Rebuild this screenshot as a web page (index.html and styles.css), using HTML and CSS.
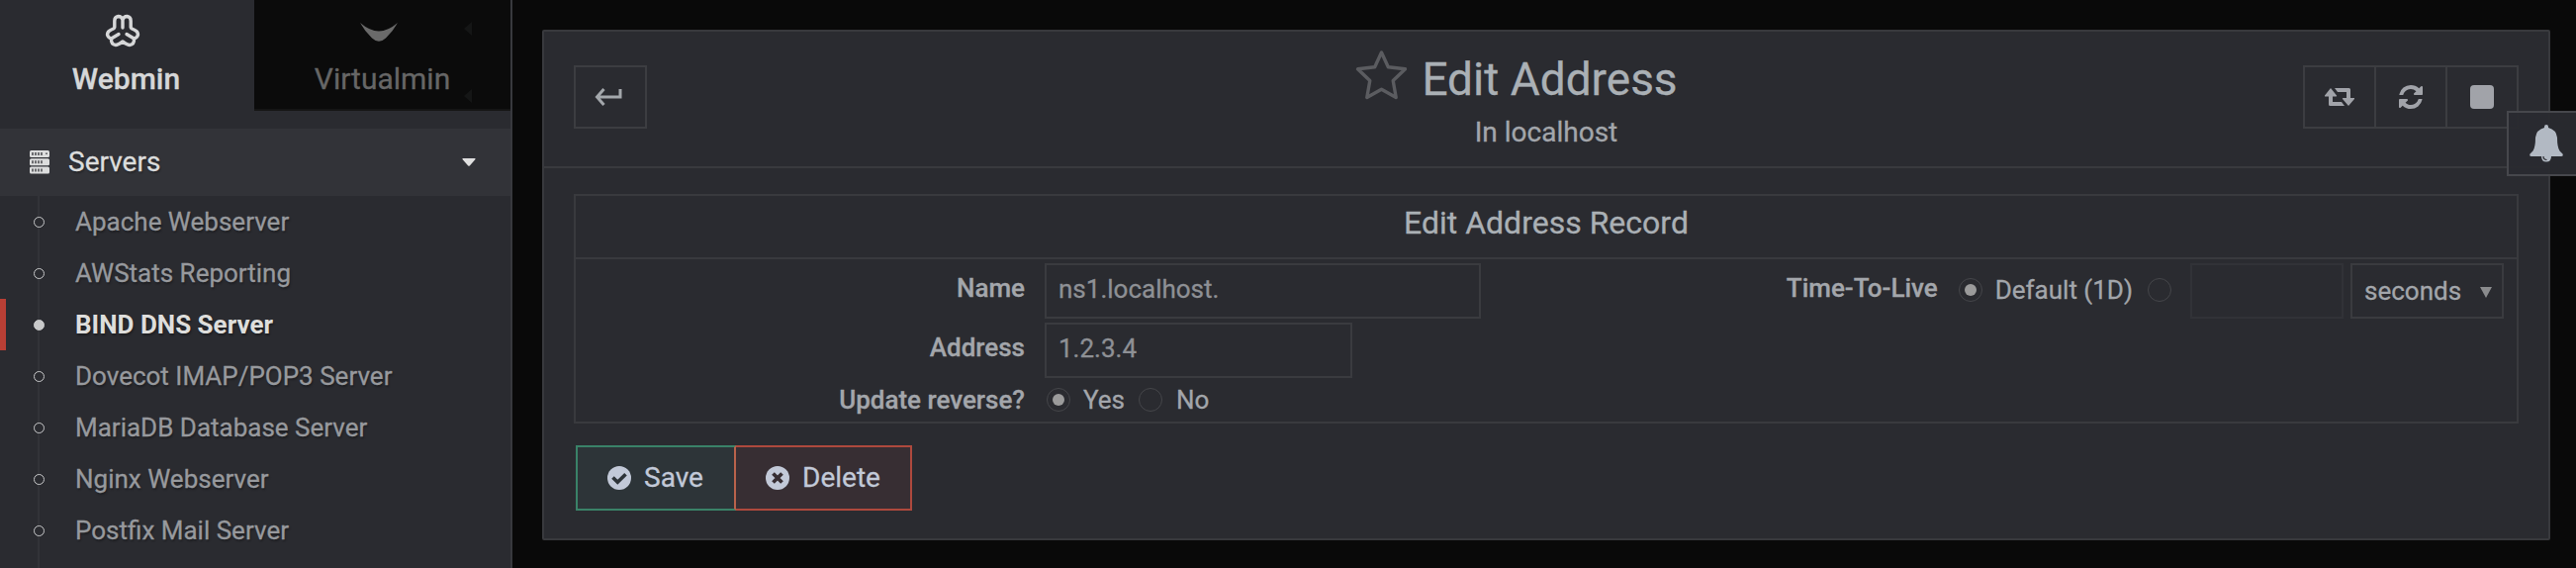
FILE: index.html
```html
<!DOCTYPE html>
<html lang="en">
<head>
<meta charset="utf-8">
<title>Edit Address</title>
<link rel="stylesheet" href="styles.css">
</head>
<body>
<aside class="sidebar">
  <nav class="tabs">
    <a class="tab tab-active">
      <svg class="tab-icon" width="36" height="34" viewBox="0 0 36 34" fill="none" stroke="#d6d7d8" stroke-width="3.4" stroke-linecap="round" stroke-linejoin="round"><path d="M18 14V6Q17 2.500 13.500 2.500Q9.800 3 9.800 7V13.500Q9.500 15 6.500 16Q2.500 17.500 2.500 21Q3 24 6.500 25Q6 31 11 31.500Q13 31.500 18 28Q23 31.500 25 31.500Q30 31 29.500 25Q33 24 33.500 21Q33.500 17.500 29.500 16Q26.500 15 26.200 13.500V7Q26.200 3 22.500 2.500Q19 2.500 18 6M6.500 25L14 20.500M29.500 25L22 20.500"/></svg>
      <span>Webmin</span>
    </a>
    <a class="tab tab-muted">
      <svg class="tab-icon" width="38" height="34" viewBox="0 0 38 34"><path d="M0 9Q10 17.500 19 17.500Q28 17.500 38 9Q33 18 26 24.500Q19 31 12 24.500Q5 18 0 9Z" fill="#6a6a6a"/></svg>
      <span>Virtualmin</span>
      <i class="notch notch-top"></i><i class="notch notch-bottom"></i>
    </a>
  </nav>
  <div class="group">
    <svg width="20" height="24" viewBox="0 0 20 24"><g fill="#dcdddd"><rect y="0" width="20" height="7" rx="1.500"/><rect y="8.200" width="20" height="7" rx="1.500"/><rect y="16.400" width="20" height="7" rx="1.500"/></g><path d="M3 2v3M6 2v3M9 2v3M12 2v3M17 2.500v1.500M3 10.200v3M6 10.200v3M9 10.200v3M12 10.200v3M3 18.400v3M6 18.400v3M9 18.400v3M12 18.400v3" stroke="#323338" stroke-width="1.300"/></svg>
    <span class="group-name">Servers</span>
    <svg width="14" height="8" viewBox="0 0 14 8"><path d="M1 0H13Q14 .5 13.300 1.300L7.800 7.500Q7 8.200 6.200 7.500L.7 1.300Q0 .5 1 0Z" fill="#e0e0e0"/></svg>
  </div>
  <ul class="modules">
    <li>Apache Webserver</li>
    <li>AWStats Reporting</li>
    <li class="current">BIND DNS Server</li>
    <li>Dovecot IMAP/POP3 Server</li>
    <li>MariaDB Database Server</li>
    <li>Nginx Webserver</li>
    <li>Postfix Mail Server</li>
  </ul>
</aside>
<main class="panel">
  <header class="panel-head">
    <a class="back"><svg width="28" height="18" viewBox="0 0 28 18" fill="none" stroke="#a3a7ab" stroke-width="3"><path d="M9.500 1L2.500 9L9.500 17M3 9H26V1"/></svg></a>
    <div class="heading">
      <h1><svg class="star" width="54" height="54" viewBox="0 0 54 54" fill="none" stroke="#5b5c60" stroke-width="3.400" stroke-linejoin="round"><path d="M26.500 3L33.300 17.700L50.500 19.800L38.200 31.500L41.200 48.500L26.500 40.200L11.800 48.500L14.800 31.500L2.500 19.800L19.700 17.700Z"/></svg><span>Edit Address</span></h1>
      <p>In localhost</p>
    </div>
    <div class="tools">
      <a><svg width="30" height="18" viewBox="0 0 30 18" fill="#a1a3a9"><path d="M6 0L12 7.500Q12.500 8.500 11.500 8.500H8V14H17L20 18H5.500Q4 18 4 16.500V8.500H.5Q-.5 8.500 0 7.500ZM10 0H24.500Q26 0 26 1.500V10H29.500Q30.500 10 30 11L24 18L18 11Q17.500 10 18.500 10H22V4H13Z"/></svg></a>
      <a><svg width="28" height="28" viewBox="0 0 1792 1792"><path fill="#a1a3a9" d="M1639 1056q0 5-1 7-64 268-268 434.500T892 1664q-146 0-282.500-55T366 1452l-129 129q-19 19-45 19t-45-19-19-45v-448q0-26 19-45t45-19h448q26 0 45 19t19 45-19 45l-137 137q71 66 161 102t187 36q134 0 250-65t186-179q11-17 53-117 8-23 30-23h192q13 0 22.500 9.500t9.500 22.500zm25-800v448q0 26-19 45t-45 19h-448q-26 0-45-19t-19-45 19-45l138-138Q1097 384 896 384q-134 0-250 65T460 628q-11 17-53 117-8 23-30 23H178q-13 0-22.500-9.500T146 736v-7q65-268 270-434.500T896 128q146 0 284 55.500T1425 340l130-129q19-19 45-19t45 19 19 45z"/></svg></a>
      <a><i class="stop"></i></a>
    </div>
  </header>
  <section class="record">
    <h2>Edit Address Record</h2>
    <div class="fields">
      <div class="fields-left">
        <div class="row"><label>Name</label><div class="input name-input">ns1.localhost.</div></div>
        <div class="row"><label>Address</label><div class="input address-input">1.2.3.4</div></div>
        <div class="row row-short"><label>Update reverse?</label><i class="radio on"></i><span class="yes">Yes</span><i class="radio"></i><span class="no">No</span></div>
      </div>
      <div class="ttl"><label>Time-To-Live</label><i class="radio on"></i><span class="default">Default (1D)</span><i class="radio"></i><div class="input ttl-input"></div><div class="input select"><span>seconds</span><i class="arrow"></i></div></div>
    </div>
  </section>
  <div class="actions">
    <button class="save"><svg width="24" height="24" viewBox="0 0 24 24"><circle cx="12" cy="12" r="12" fill="#c2c9d8"/><path d="M5.500 11.500L10.300 16.300L18.500 8.200" fill="none" stroke="#2d3338" stroke-width="3.600"/></svg><span>Save</span></button>
    <button class="delete"><svg width="24" height="24" viewBox="0 0 24 24"><circle cx="12" cy="12" r="12" fill="#c2c9d8"/><path d="M7.500 7.500L16.500 16.500M16.500 7.500L7.500 16.500" fill="none" stroke="#372e33" stroke-width="3.800"/></svg><span>Delete</span></button>
  </div>
</main>
<div class="bell"><svg width="34" height="38" viewBox="0 0 34 38"><path d="M17 0Q19 0 19 2V3Q27 5 28 13Q28 23 30.500 26.500L33.500 29.500Q34.500 32 32 32H22Q22 37.500 17 37.500Q12 37.500 12 32H2Q-.5 32 .5 29.500L3.500 26.500Q6 23 6 13Q7 5 15 3V2Q15 0 17 0Z" fill="#b2b9c3"/><path d="M14 32Q14 35.500 17.500 35.500" fill="none" stroke="#2a2b30" stroke-width="1.200"/></svg></div>
</body>
</html>
```
FILE: styles.css
```css
*, *::before { box-sizing: border-box; }
body {
  margin: 0;
  width: 2604px;
  height: 574px;
  overflow: hidden;
  position: relative;
  display: flex;
  align-items: flex-start;
  background: #090909;
  color: #a3a6ab;
  font: 26px/30px Roboto, sans-serif;
  -webkit-text-stroke: .3px;
}
svg { display: block; flex: none; }
h1, h2, p, ul { margin: 0; padding: 0; font-weight: 400; }

/* Sidebar */
.sidebar {
  width: 518px;
  height: 574px;
  flex: none;
  background: #2a2b30;
  border-right: 2px solid #38393e;
  text-shadow: 1px 2px 2px rgba(0, 0, 0, .3);
}
.tabs { display: flex; height: 130px; align-items: flex-start; }
.tab {
  position: relative;
  width: 257px;
  height: 112px;
  padding-top: 14px;
  display: flex;
  flex-direction: column;
  align-items: center;
  font-size: 30px;
  line-height: 36px;
  text-shadow: none;
}
.tab-icon { margin: 0 8px 14px 0; }
.tab-active { color: #d6d7d8; font-weight: 500; padding-right: 2px; }
.tab-muted {
  width: 259px;
  background: #0b0b0b;
  border-bottom: 2px solid #151515;
  color: #666;
}
.notch {
  position: absolute;
  left: 212px;
  border: solid transparent;
  border-width: 7px 8px 7px 0;
  border-right-color: #151616;
}
.notch-top { top: 22px; }
.notch-bottom { top: 90px; }
.group {
  height: 68px;
  padding: 0 35px 0 30px;
  display: flex;
  align-items: center;
  background: #323338;
  color: #dcdddd;
  font-size: 28px;
}
.group-name { flex: 1; margin-left: 19px; }
.modules {
  height: 376px;
  list-style: none;
  background: linear-gradient(#323338, #323338) 38px 0 / 2px 100% no-repeat;
}
.modules li {
  height: 52px;
  padding-left: 34px;
  display: flex;
  align-items: center;
  color: #97999d;
}
.modules li::before {
  content: "";
  width: 11px;
  height: 11px;
  margin-right: 31px;
  border: 1.5px solid #c8c9ca;
  border-radius: 50%;
  background: #2a2b30;
}
.modules .current {
  padding-left: 28px;
  border-left: 6px solid #b93f35;
  color: #dededc;
  font-weight: 700;
  -webkit-text-stroke: 0;
}
.modules .current::before { background: #c8c9ca; }

/* Panel */
.panel {
  width: 2030px;
  height: 516px;
  margin: 30px 0 0 30px;
  background: #2a2b30;
  border: 2px solid #38393d;
  border-radius: 2px;
}
.panel-head {
  height: 138px;
  padding: 34px 30px 0;
  display: grid;
  grid-template-columns: 218px 1fr 218px;
  align-items: start;
  border-bottom: 2px solid #393a3e;
}
.back {
  width: 74px;
  height: 64px;
  display: flex;
  align-items: center;
  justify-content: center;
  border: 2px solid #3c3d41;
  padding-right: 4px;
}
.heading { margin-top: -34px; padding-top: 16px; text-align: center; }
h1 {
  display: flex;
  justify-content: center;
  padding-right: 60px;
  font-size: 46px;
  line-height: 64px;
  color: #aab0b5;
}
.star { margin: 2px 13px 0 0; }
.heading p { font-size: 28px; line-height: 34px; margin-top: 5px; }
.tools { display: flex; width: 218px; height: 64px; border: 2px solid #3c3d41; }
.tools a {
  flex: 1;
  display: flex;
  align-items: center;
  justify-content: center;
}
.tools a + a { border-left: 2px solid #3c3d41; }
.stop { width: 24px; height: 24px; border-radius: 4px; background: #a1a3a9; }

.record {
  margin: 26px 30px 0;
  height: 232px;
  border: 2px solid #393a3e;
}
h2 {
  height: 64px;
  border-bottom: 2px solid #393a3e;
  color: #aab0b5;
  font-size: 32px;
  line-height: 54px;
  text-align: center;
}
.fields { display: flex; justify-content: space-between; padding: 4px 13px 0 0; }
.row { display: flex; height: 60px; }
.row label { width: 454px; margin: 10px 20px 0 0; text-align: right; }
label { font-weight: 500; }
.input {
  height: 56px;
  padding: 9px 12px;
  border: 2px solid #3a3b3f;
  color: #8e9095;
}
.name-input { width: 441px; }
.address-input { width: 311px; }
.row-short { height: 36px; align-items: center; }
.row-short label { margin-top: 0; }
.radio {
  flex: none;
  width: 24px;
  height: 24px;
  border: 1px solid #45464a;
  border-radius: 50%;
  display: flex;
  align-items: center;
  justify-content: center;
}
.on::before { content: ""; width: 12px; height: 12px; border-radius: 50%; background: #9b9b9b; }
.row-short .radio { margin-left: 2px; }
.yes { margin: 0 12px 0 13px; }
.no { margin-left: 14px; }
.ttl { display: flex; }
.ttl label { margin: 10px 21px 0 0; }
.ttl .radio { margin-top: 15px; }
.default { margin: 12px 15px 0 13px; }
.ttl-input { width: 155px; margin: 0 7px 0 19px; border-color: #313237; }
.select {
  width: 155px;
  padding-top: 11px;
  display: flex;
  justify-content: space-between;
  color: #a3a6ab;
  padding-right: 10px;
}
.arrow {
  width: 0;
  height: 0;
  margin-top: 11px;
  border: solid transparent;
  border-width: 11px 6px 0;
  border-top-color: #8a8b8d;
}

.actions { display: flex; margin: 22px 0 0 32px; }
.actions button {
  height: 66px;
  padding: 0 0 0 30px;
  display: flex;
  align-items: center;
  gap: 13px;
  color: #c2c9d8;
  font: 28px/34px Roboto, sans-serif;
  text-align: left;
}
.save { width: 162px; background: #2d3438; border: 2px solid #3a8268; border-right-color: #b8624b; }
.actions .delete { width: 178px; padding-left: 30px; background: #372e33; border: 2px solid #ae493d; border-left: 0; }

.bell {
  position: absolute;
  left: 2534px;
  top: 112px;
  width: 72px;
  height: 66px;
  padding: 12px 0 0 21px;
  background: rgba(42, 43, 48, .96);
  border: 2px solid #46474c;
}
```
